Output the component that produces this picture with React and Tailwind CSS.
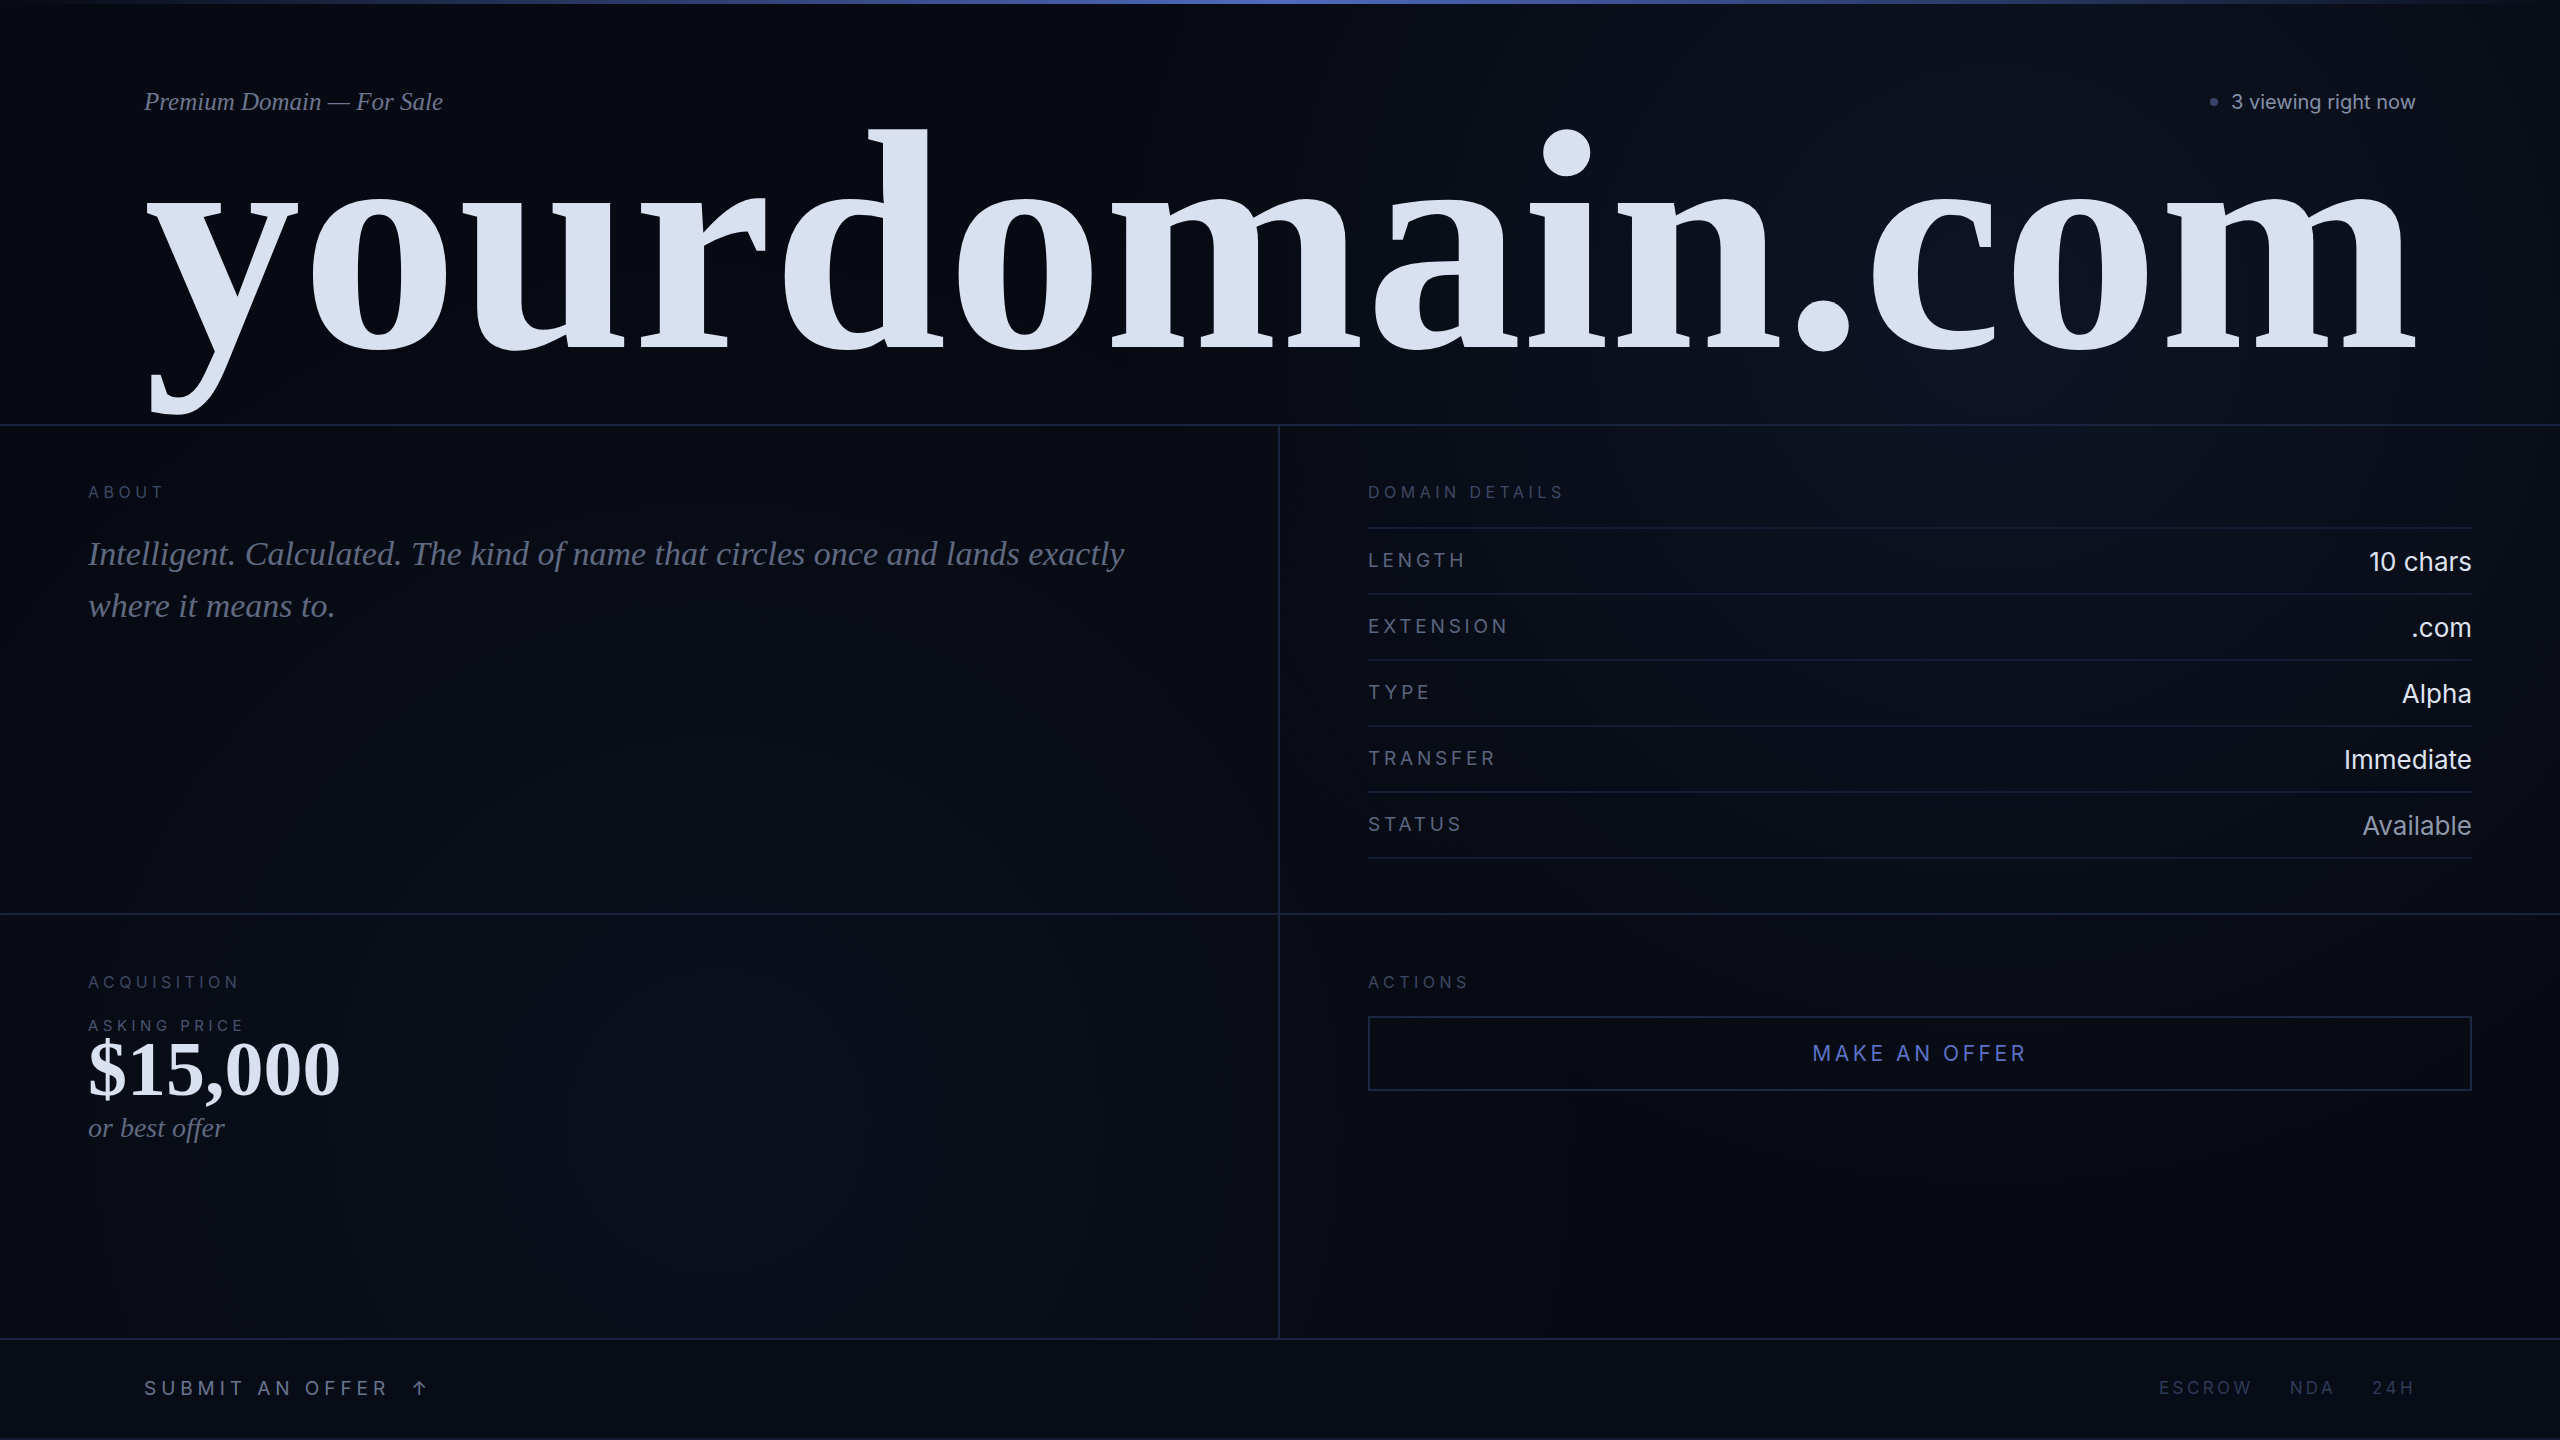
const serif = { fontFamily: '"Liberation Serif", "DejaVu Serif", serif' };

function Label({ children, className = '' }) {
  return (
    <div className={`font-['Inter',sans-serif] text-[16px] leading-[22px] tracking-[0.28em] text-[#3e4864] uppercase ${className}`}>
      {children}
    </div>
  );
}

const details = [
  { k: 'Length', v: '10 chars' },
  { k: 'Extension', v: '.com' },
  { k: 'Type', v: 'Alpha' },
  { k: 'Transfer', v: 'Immediate' },
  { k: 'Status', v: 'Available', dim: true },
];

export default function App() {
  return (
    <div className="h-[1440px] w-full overflow-hidden flex flex-col bg-[#070a12] bg-[radial-gradient(circle_at_78%_22%,rgba(22,32,58,0.45),transparent_38%),radial-gradient(circle_at_28%_78%,rgba(18,26,46,0.4),transparent_40%)] font-['Inter',sans-serif]">
      {/* top accent */}
      <div className="h-1 shrink-0 bg-gradient-to-r from-transparent via-[#4f6bbf] to-transparent" />

      {/* hero */}
      <header className="h-[422px] shrink-0 flex flex-col px-36 pt-[84px] border-b-2 border-[#1a2340]">
        <div className="flex items-center justify-between">
          <p className="italic text-[25px] leading-[28px] text-[#6c7690]" style={serif}>
            Premium Domain — For Sale
          </p>
          <div className="flex items-center gap-[13px] text-[20px] leading-[28px] text-[#8490a8]">
            <span className="w-2 h-2 rounded-full bg-[#3a4468]" />
            3 viewing right now
          </div>
        </div>
        <h1 className="font-bold text-[314px] leading-[0.8] text-[#d9e0f0] whitespace-nowrap" style={serif}>
          yourdomain.com
        </h1>
      </header>

      {/* grid */}
      <main className="grid grid-cols-2 grid-rows-[489px_425px] shrink-0">
        <section className="border-r-2 border-b-2 border-[#1a2340] px-[88px] pt-[55px]">
          <Label>About</Label>
          <p className="mt-[25px] max-w-[1100px] italic text-[34px] leading-[52px] text-[#5f6a82]" style={serif}>
            Intelligent. Calculated. The kind of name that circles once and lands exactly where it means to.
          </p>
        </section>

        <section className="border-b-2 border-[#1a2340] px-[88px] pt-[55px]">
          <Label>Domain Details</Label>
          <div className="mt-[24px] border-t-2 border-[#141c33]">
            {details.map((d) => (
              <div key={d.k} className="h-[66px] flex items-center justify-between border-b-2 border-[#141c33]">
                <span className="text-[19px] tracking-[0.2em] uppercase text-[#5a6580]">{d.k}</span>
                <span className={`text-[26px] ${d.dim ? 'text-[#8d97ab]' : 'text-[#dde3f0]'}`}>{d.v}</span>
              </div>
            ))}
          </div>
        </section>

        <section className="border-r-2 border-b-2 border-[#1a2340] px-[88px] pt-[56px]">
          <Label>Acquisition</Label>
          <div className="mt-[26px] text-[15px] leading-[14px] tracking-[0.3em] uppercase text-[#4a5572]">Asking Price</div>
          <div className="font-bold text-[78px] leading-[0.92] text-[#d9e0f0]" style={serif}>
            $15,000
          </div>
          <div className="mt-[7px] italic text-[28px] leading-[32px] text-[#5f6a82]" style={serif}>
            or best offer
          </div>
        </section>

        <section className="border-b-2 border-[#1a2340] px-[88px] pt-[56px]">
          <Label>Actions</Label>
          <button className="mt-[23px] w-full h-[75px] border-2 border-[#1c2746] flex items-center justify-center text-[21px] tracking-[0.17em] uppercase text-[#5a72c6]">
            Make an Offer
          </button>
        </section>
      </main>

      {/* footer */}
      <footer className="flex-1 flex items-center justify-between px-36 bg-[#080c17] border-b-2 border-[#131b33]">
        <div className="flex items-center gap-[21px] text-[19px] tracking-[0.26em] uppercase text-[#6a7590]">
          Submit an Offer
          <span className="tracking-normal">↑</span>
        </div>
        <div className="flex items-center gap-[36px] text-[17px] tracking-[0.2em] uppercase text-[#2f3a58]">
          <span>Escrow</span>
          <span>NDA</span>
          <span>24H</span>
        </div>
      </footer>
    </div>
  );
}
